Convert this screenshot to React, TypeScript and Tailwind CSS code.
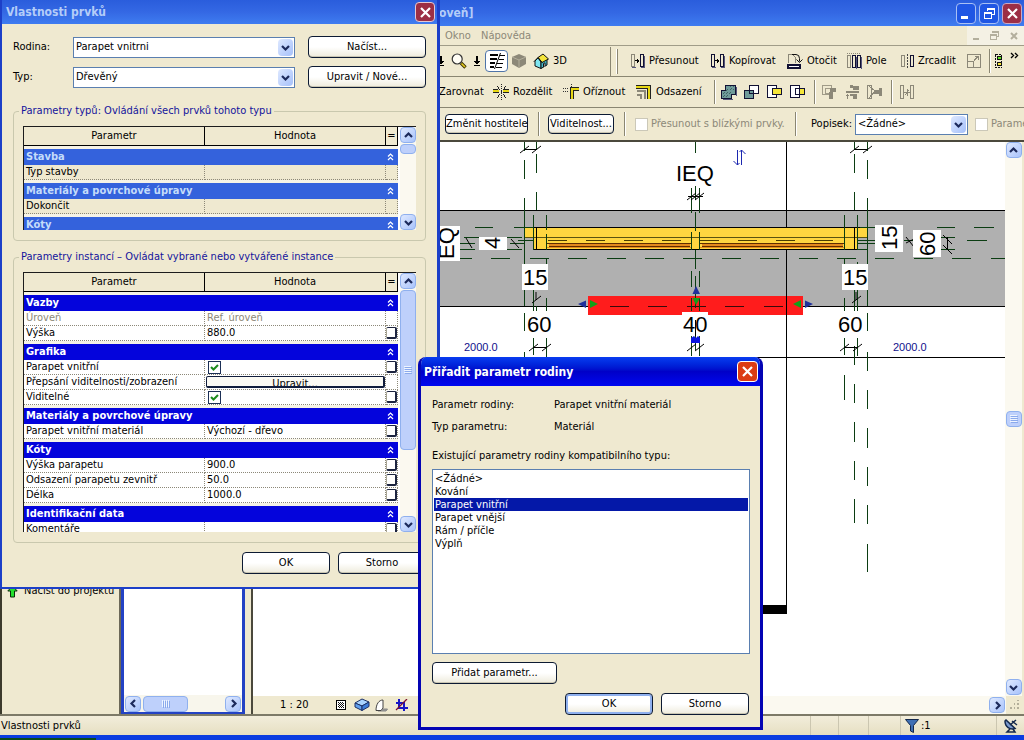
import React from 'react';

type Children = { children?: React.ReactNode };

/* ---------- shared controls ---------- */

function Chevron({ dir }: { dir: 'up' | 'down' | 'left' | 'right' }) {
  const d = {
    up: 'M1 6 L4.5 2.5 L8 6',
    down: 'M1 3 L4.5 6.5 L8 3',
    left: 'M6 1 L2.5 4.5 L6 8',
    right: 'M3 1 L6.5 4.5 L3 8',
  }[dir];
  return (
    <svg width="9" height="9" viewBox="0 0 9 9" fill="none" stroke="#1c2a5c" strokeWidth="2.2">
      <path d={d} />
    </svg>
  );
}

function ScrollButton({ dir, label }: { dir: 'up' | 'down' | 'left' | 'right'; label: string }) {
  return (
    <button
      type="button"
      aria-label={label}
      className="flex h-4 w-4 shrink-0 items-center justify-center rounded-sm border border-[#8fb0ee] bg-linear-to-br from-[#dfe9ff] to-[#a9c3fb]"
    >
      <Chevron dir={dir} />
    </button>
  );
}

function Grip({ vertical }: { vertical?: boolean }) {
  return (
    <svg width="8" height="8" viewBox="0 0 8 8" shapeRendering="crispEdges">
      <path
        d={vertical ? 'M0.5 0V7M2.5 0V7M4.5 0V7M6.5 0V7' : 'M0 0.5H7M0 2.5H7M0 4.5H7M0 6.5H7'}
        stroke="#eef4ff"
      />
      <path
        d={vertical ? 'M1.5 1V8M3.5 1V8M5.5 1V8M7.5 1V8' : 'M1 1.5H8M1 3.5H8M1 5.5H8M1 7.5H8'}
        stroke="#8aa9ec"
      />
    </svg>
  );
}

function CloseIcon() {
  return (
    <svg width="11" height="11" viewBox="0 0 11 11" stroke="#ffffff" strokeWidth="2.2">
      <path d="M1 1 L10 10 M10 1 L1 10" />
    </svg>
  );
}

function PushButton({ children, size, primary }: Children & { size: string; primary?: boolean }) {
  return (
    <button
      type="button"
      className={
        'rounded-sm border bg-linear-to-b from-white via-white to-[#eeebdc] text-center whitespace-nowrap border-[#0c1a33] ' +
        (primary ? 'shadow-[inset_0_0_0_2px_#8fb0ee] ' : 'shadow-[inset_0_-1px_0_#c9c5b2] ') +
        size
      }
    >
      {children}
    </button>
  );
}

function Combo({ id, value, className }: { id: string; value: string; className: string }) {
  return (
    <div className={'flex items-center border border-[#5a7fb0] bg-white pr-px ' + className}>
      <select
        id={id}
        className="h-full min-w-0 flex-1 appearance-none bg-transparent pl-0.5 text-black outline-none"
        defaultValue={value}
      >
        <option>{value}</option>
      </select>
      <span className="flex h-[17px] w-[15px] items-center justify-center rounded-sm bg-linear-to-br from-[#dfe9ff] to-[#a5c0fa]">
        <Chevron dir="down" />
      </span>
    </div>
  );
}

/* ---------- toolbar ---------- */

function Tool({ width, icon, label, name }: { width: string; icon: React.ReactNode; label?: string; name?: string }) {
  return (
    <button type="button" aria-label={label ?? name} className={'flex shrink-0 items-center gap-1 whitespace-nowrap ' + width}>
      {icon}
      {label && <span>{label}</span>}
    </button>
  );
}

function Divider({ width }: { width: string }) {
  return (
    <div className={'flex shrink-0 ' + width}>
      <div className="h-6 w-0.5 border-r border-l border-r-white border-l-[#8a8672]" />
    </div>
  );
}

function Icon({ w = 16, children }: Children & { w?: number }) {
  return (
    <svg width={w} height="16" viewBox={`0 0 ${w} 16`} fill="none" shapeRendering="crispEdges" className="shrink-0">
      {children}
    </svg>
  );
}

const DownArrow = () => (
  <Icon w={8}>
    <path d="M3 3h2v5h2v1h-1v1h-1v1h-2v-1h-1v-1h-1v-1h2zM1 12h6v1h-6z" fill="#000" />
  </Icon>
);
const Magnifier = () => (
  <svg width="16" height="16" viewBox="0 0 16 16" fill="none" className="shrink-0">
    <path d="M10 10 L14.5 14.5" stroke="#3a3000" strokeWidth="3.4" />
    <path d="M10.5 10.5 L14 14" stroke="#e8cf20" strokeWidth="1.6" />
    <circle cx="6.2" cy="6" r="5" fill="#fffdf5" stroke="#333" strokeWidth="1.2" />
  </svg>
);
const ThinLines = () => (
  <Icon>
    <path d="M1 2h8M1 6h7M1 10h5M1 14h4" stroke="#000" strokeWidth="2" />
    <path d="M11 2.500h5M10 6.500h5M8 10.500h6M7 14.500h6" stroke="#000" />
    <path d="M11.500 0 L5.500 16" stroke="#000" shapeRendering="auto" />
  </Icon>
);
const Cube = () => (
  <svg width="16" height="16" viewBox="0 0 16 16" className="shrink-0">
    <path d="M8 1 L15 4 V11 L8 15 L1 11 V4 Z" fill="#8c8878" />
    <path d="M1 4 L8 7 L15 4 M8 7 V15" stroke="#b3ae9a" fill="none" />
  </svg>
);
const House = () => (
  <svg width="16" height="16" viewBox="0 0 16 16" stroke="#111" strokeLinejoin="round" className="shrink-0">
    <path d="M2 8 V13 L8 15.5 V9 L5 5 Z" fill="#7fe6f0" />
    <path d="M8 9 V15.5 L14 12 V6 Z" fill="#45b9c9" />
    <path d="M5 4.500 L10 1 L15.500 6 L9 9.500 Z" fill="#f4e53a" />
    <path d="M0.800 8.800 L5 4.500 L9 9.500" fill="none" />
    <path d="M10.500 14 V10.500 L12 9.800 V13" fill="#fff" />
  </svg>
);
const MoveIcon = ({ solid }: { solid?: boolean }) => (
  <Icon w={15}>
    <path d="M1.500 1.500h3v12h-3z" stroke={solid ? '#111133' : '#8c8878'} />
    <path d="M10.500 1.500h3v12h-3z" stroke="#111133" />
    <path d="M2 14.500h4M11 14.500h4M14.500 3v12" stroke="#55557a" />
    <path d="M5 7.500h4M7.500 5.500v4M8.500 6.500v2" stroke="#000" />
  </Icon>
);
const RotateIcon = () => (
  <Icon>
    <path d="M1.500 10V1.500h4l3 3V10" stroke="#8c8878" />
    <path d="M1 12h12v3h-12z" fill="#fff" stroke="#111133" strokeWidth="2" />
    <path d="M5 1.500h4q3.500 0 3.500 4v3M9.500 6.500l3 3l3 -3" stroke="#111" shapeRendering="auto" />
  </Icon>
);
const ArrayIcon = () => (
  <Icon>
    <path d="M1.500 2.500h3v12h-3z" stroke="#8c8878" />
    <path d="M6.500 2.500h3v12h-3zM11.500 2.500h3v12h-3z" stroke="#111133" />
    <path d="M10.500 4v12M15.500 4v12" stroke="#55557a" />
    <path d="M1 0.500h14" stroke="#8c8878" strokeDasharray="1 1" />
  </Icon>
);
const MirrorIcon = () => (
  <Icon w={14}>
    <path d="M1.500 2.500h3v11h-3z" stroke="#8c8878" />
    <path d="M7.500 1v14" stroke="#444" strokeDasharray="2 1" />
    <path d="M10.500 2.500h3v11h-3z" stroke="#111133" />
  </Icon>
);
const ResizeIcon = () => (
  <Icon>
    <path d="M1.500 1.500h13v13h-13zM1.500 8.500h6v6M8 7.500l4 -4M9 3.500h3.500v3.500" stroke="#8c8878" />
  </Icon>
);
const GroupIcon = () => (
  <Icon w={9}>
    <path d="M1.500 1.500h6v13h-6z" stroke="#111" strokeDasharray="2 1" />
    <path d="M3.500 3.500h4v3h-4z" fill="#5fe020" stroke="#111" />
    <path d="M3.500 9.500h4v3h-4z" fill="#f4e53a" stroke="#111" />
  </Icon>
);
const SplitIcon = () => (
  <Icon>
    <path d="M0 7h6M10 7h6" stroke="#e8d814" strokeWidth="2" />
    <path d="M0 8.500h6M10 8.500h6M0 5.500h5M11 5.500h5" stroke="#222" />
    <path d="M8.500 0v5M8.500 11v5M4 2l3 4M13 2l-3 4M4 14l3 -4M13 14l-3 -4" stroke="#222" strokeDasharray="1 1" />
    <path d="M8.500 6v4" stroke="#222" />
  </Icon>
);
const TrimIcon = () => (
  <Icon>
    <path d="M0 4.500h6M0 7.500h6M8.500 0v4" stroke="#333" strokeDasharray="1 1" />
    <path d="M7 5h9M9 4v11" stroke="#222" strokeWidth="4" />
    <path d="M8 5h8M9 4v11" stroke="#e8d814" strokeWidth="2" />
  </Icon>
);
const OffsetIcon = () => (
  <Icon>
    <path d="M0 3h15M13 2v13" stroke="#222" strokeWidth="4" />
    <path d="M0 3h14M13 2v13" stroke="#e8d814" strokeWidth="2" />
    <path d="M1 7h8v8M1 11h4v4" stroke="#8c8878" strokeWidth="2" />
  </Icon>
);
const JoinFill = '#6f9a9a';
const JoinIcon = ({ cut }: { cut?: boolean }) => (
  <Icon>
    {cut ? (
      <>
        <path d="M1.500 6.500h9v8h-9z" fill={JoinFill} stroke="#111133" />
        <path d="M6.500 1.500h9v8h-9z" fill="#fff" stroke="#111133" />
        <path d="M6.500 6.500h4v3h-4z" fill={JoinFill} stroke="#111133" />
      </>
    ) : (
      <>
        <path d="M0.500 14.500v-8h4v-5h10v9h-4v4z" fill={JoinFill} stroke="#111133" />
        <path d="M2 13l11 -11M2 10l8 -8M5 13l8 -8" stroke="#3f6464" strokeDasharray="1 1" />
        <path d="M15.500 3v9M2 15.500h10" stroke="#55557a" />
      </>
    )}
  </Icon>
);
const BoxPair = ({ half }: { half?: boolean }) => (
  <Icon>
    <path d="M1.500 1.500h9v12h-9z" fill="#fff" stroke="#111133" />
    <path d="M6.500 4.500h9v6h-9z" fill="#f4e53a" stroke="#111133" />
    {half && <path d="M6.500 4.500h4v6h-4z" fill="#fff" stroke="#111133" />}
  </Icon>
);
const Grey1 = () => (
  <Icon>
    <path d="M0.500 1.500h9v9h-9zM3.500 4.500h5v5h-5z" stroke="#a09b88" />
    <path d="M8 4h6v4h-3v7h-4v-7h1z" fill="#8c8878" />
  </Icon>
);
const Grey2 = () => (
  <Icon>
    <path d="M5 1h3v3h-3zM8 2h6v4h-6zM1 7h13v2h-13zM5 10h7v5h-4v-3h-3z" fill="#8c8878" />
    <path d="M2.500 15v-5M1 11.500h3" stroke="#8c8878" />
  </Icon>
);
const Grey3 = () => (
  <Icon>
    <path d="M0.500 1.500h4v13h-4zM2 2l6 5l-6 7" stroke="#8c8878" />
    <path d="M7 6h7v4h-7zM12 4h3v8h-3z" fill="#8c8878" />
  </Icon>
);
const Grey4 = () => (
  <Icon>
    <path d="M1.500 1.500h3v13h-3zM11.500 1.500h3v13h-3zM5 8.500h6M6 11l4 -5M8.500 5v7" stroke="#8c8878" />
  </Icon>
);

function Toolbars() {
  return (
    <div className="shrink-0">
      <div className="flex h-[31px] items-center overflow-hidden border-b border-[#8a8672] pl-[437px]">
        <Tool width="w-3.5" name="Seznam" icon={<DownArrow />} />
        <Tool width="w-[22px]" name="Lupa" icon={<Magnifier />} />
        <Tool width="w-3" name="Možnosti lupy" icon={<DownArrow />} />
        <Tool
          width="h-[22px] w-[23px] justify-center rounded-sm border border-[#4f74a8] bg-white"
          name="Tenké čáry"
          icon={<ThinLines />}
        />
        <Tool width="w-[25px] pl-[3px]" name="Stínování" icon={<Cube />} />
        <Tool width="w-[77px]" label="3D" icon={<House />} />
        <div className="flex w-5 shrink-0 gap-[5px]">
          <div className="h-[29px] w-px bg-[#8a8672]" />
          <div className="my-0.5 w-0.5 border-r border-[#8a8672] bg-white" />
        </div>
        <Tool width="w-20" label="Přesunout" icon={<MoveIcon />} />
        <Tool width="w-[77px]" label="Kopírovat" icon={<MoveIcon solid />} />
        <Tool width="w-[59px]" label="Otočit" icon={<RotateIcon />} />
        <Tool width="w-[54px]" label="Pole" icon={<ArrayIcon />} />
        <Tool width="w-[66px]" label="Zrcadlit" icon={<MirrorIcon />} />
        <Tool width="w-[23px]" name="Měřítko" icon={<ResizeIcon />} />
        <Divider width="w-[5px]" />
        <Tool width="w-4" name="Skupina" icon={<GroupIcon />} />
        <button type="button" aria-label="Další tlačítka" className="self-start pt-1.5">
          <svg width="9" height="7" viewBox="0 0 9 7" fill="none" stroke="#000" strokeWidth="1.400">
            <path d="M1 1 L3.500 3.500 L1 6 M5 1 L7.500 3.500 L5 6" />
          </svg>
        </button>
      </div>
      <div className="flex h-[31px] items-center overflow-hidden border-b border-[#8a8672] pl-[439px]">
        <Tool width="w-[54px]" label="Zarovnat" icon={null} />
        <Tool width="w-[70px]" label="Rozdělit" icon={<SplitIcon />} />
        <Tool width="w-[73px]" label="Oříznout" icon={<TrimIcon />} />
        <Tool width="w-[78px]" label="Odsazení" icon={<OffsetIcon />} />
        <Divider width="w-[7px]" />
        <Tool width="w-[22px]" name="Spojit geometrii" icon={<JoinIcon />} />
        <Tool width="w-[23px]" name="Vyjmout geometrii" icon={<JoinIcon cut />} />
        <Tool width="w-[23px]" name="Rozdělit plochu" icon={<BoxPair />} />
        <Tool width="w-[25px]" name="Nátěr" icon={<BoxPair half />} />
        <Divider width="w-2" />
        <Tool width="w-[23px]" name="Stěna" icon={<Grey1 />} />
        <Tool width="w-[22px]" name="Nosník" icon={<Grey2 />} />
        <Tool width="w-6" name="Otvor" icon={<Grey3 />} />
        <Divider width="w-2" />
        <Tool width="w-6" name="Připojit" icon={<Grey4 />} />
      </div>
      <div className="flex h-8 items-center overflow-hidden pl-[445px] whitespace-nowrap">
        <PushButton size="mr-2.5 h-5 w-[83px] shrink-0">Změnit hostitele</PushButton>
        <Divider width="w-2.5" />
        <PushButton size="mr-2.5 h-5 w-[66px] shrink-0">Viditelnost...</PushButton>
        <Divider width="w-[11px]" />
        <label className="flex w-[160px] shrink-0 items-center gap-[3px] text-[#8c8878]">
          <input type="checkbox" disabled className="h-[13px] w-[13px] shrink-0 appearance-none border border-[#cbc8b8] bg-white" />
          Přesunout s blízkými prvky.
        </label>
        <Divider width="w-4" />
        <label htmlFor="popisek" className="w-11 shrink-0">
          Popisek:
        </label>
        <Combo id="popisek" value="<Žádné>" className="mr-[7px] h-[21px] w-[113px] shrink-0" />
        <label className="flex shrink-0 items-center gap-[3px] text-[#8c8878]">
          <input type="checkbox" disabled className="h-[13px] w-[13px] shrink-0 appearance-none border border-[#cbc8b8] bg-white" />
          Parametr instance
        </label>
      </div>
    </div>
  );
}

/* ---------- floor plan ---------- */

const INK = '#000000';
const REF = '#0b3d12';

const verticalRefs: [number, number, number][] = [
  [524, 142, 151], [524, 160, 179], [524, 198, 306], [524, 313, 331], [524, 352, 357],
  [536, 142, 149], [536, 154, 173], [536, 192, 210], [536, 306, 311],
  [533, 215, 250], [533, 290, 311], [533, 338, 355],
  [546, 215, 230], [546, 234, 250], [546, 258, 264], [546, 298, 311], [546, 338, 357],
  [691, 188, 213], [691, 232, 250], [691, 271, 287], [691, 298, 311], [691, 336, 356],
  [699, 188, 213], [699, 232, 250], [699, 271, 287], [699, 298, 311], [699, 336, 356],
  [695, 142, 153], [695, 186, 200], [695, 212, 231], [695, 250, 269], [695, 276, 308], [695, 318, 350],
  [844, 215, 250], [844, 258, 278], [844, 298, 311], [844, 338, 355], [844, 375, 400],
  [857, 215, 250], [857, 262, 266], [857, 290, 311], [857, 338, 356],
  [854, 142, 149], [854, 154, 173], [854, 192, 210], [854, 290, 311],
  [854, 346, 365], [854, 384, 403], [854, 422, 442], [854, 461, 480], [854, 499, 523],
  [867, 142, 151], [867, 160, 179], [867, 198, 306], [867, 313, 331],
  [867, 352, 371], [867, 390, 409], [867, 428, 448], [867, 467, 486], [867, 505, 524], [867, 544, 572],
];

const horizontalRefs: [number, number, number][] = [
  [227, 475, 493], [227, 514, 533], [227, 860, 878], [227, 937, 955], [227, 974, 994],
  [237, 464, 487], [237, 506, 522], [237, 937, 955],
  [240, 518, 534], [240, 857, 875], [240, 904, 918], [240, 967, 987],
  [243, 453, 475], [243, 510, 525], [243, 857, 875], [243, 929, 941],
  [249, 460, 475], [249, 506, 522], [249, 857, 868], [249, 937, 955],
];

const ticks: [number, number][] = [
  [524, 149], [536, 149], [691, 196], [695, 196], [699, 196], [533, 347], [546, 347],
  [691, 347], [699, 347], [536, 299], [854, 149], [867, 149], [844, 347], [857, 347], [856, 299],
];

function Label({ x, y, children, box, turn }: Children & { x: number; y: number; box?: [number, number, number, number]; turn?: boolean }) {
  return (
    <g>
      {box && <rect x={box[0]} y={box[1]} width={box[2]} height={box[3]} fill="#fff" />}
      <text x={x} y={y} fontSize="22" fill="#000" transform={turn ? `rotate(-90 ${x} ${y})` : undefined}>
        {children}
      </text>
    </g>
  );
}

function FloorPlan() {
  return (
    <svg className="block h-full w-full font-[family-name:'Liberation_Sans',Arial,sans-serif]" aria-label="Půdorys okna">
      <g transform="translate(-253 -142)">
        <g shapeRendering="crispEdges">
          <rect x="253" y="210" width="1600" height="96" fill="#b0b0b0" />
          <path d="M253 210.5H2000M253 306.5H2000M440 357.500H2000M786.500 142V614" stroke={INK} />
          <rect x="740" y="605" width="47" height="9" fill="#000" />
          <rect x="525" y="227" width="343" height="11" fill="#ffd640" />
          <rect x="533" y="238" width="325" height="12" fill="#ffd640" />
          <path d="M525 227.500H868M533 249.500H858" stroke={INK} />
          <path d="M525 237.500H868" stroke="#5b5310" />
          <path d="M548 240.500H845" stroke="#4a3c00" strokeDasharray="19 19" />
          {[547, 700].map((x) => (
            <g key={x}>
              <rect x={x} y="243" width={145} height="5" fill="#e58a1c" />
              <path d={`M${x} 243.500h145M${x} 246.500h145`} stroke="#5e2c00" />
              <rect x={x} y="244" width="2" height="3" fill="#ffd640" />
              <rect x={x + 143} y="244" width="2" height="3" fill="#ffd640" />
            </g>
          ))}
          <path d="M536.500 227V249M854.500 227V249M524.500 198V306M867.500 198V306" stroke={INK} />
          <path d="M453 258.500H2000" stroke={REF} strokeDasharray="19 19.400" />
          <rect x="588" y="296" width="215" height="19" fill="#ff1c1c" />
          <path d="M610 306.500H786" stroke="#3b0a0a" strokeDasharray="19 19.400" />
          <path
            d={
              verticalRefs.map(([x, a, b]) => `M${x}.5 ${a}V${b}`).join('') +
              horizontalRefs.map(([y, a, b]) => `M${a} ${y}.5H${b}`).join('')
            }
            stroke={REF}
          />
          <path
            d="M524 149.500H537M854 149.500H868M688 196.500H703M533 347.500H547M844 347.500H858M947.500 237V249M786.500 290V316"
            stroke={INK}
          />
        </g>
        <path
          d={ticks.map(([x, y]) => `M${x - 4} ${y + 4}L${x + 5} ${y - 3}`).join('') + 'M466 238L472 248M511 239L519 248M906 237L914 247M906 243L914 239M943 235L952 244M943 245L952 254M536 292V300M856 292V300'}
          stroke={INK}
          fill="none"
        />
        <path d="M586 300.500V308L578 304Z M805 300.500V308L813 304Z M692.500 294H700L696 286Z" fill="#20309c" />
        <path d="M590 300V308L598 304Z M801 300V308L793 304Z M692.500 298H700L696 305Z" fill="#12a018" />
        <path d="M691 338L694 336L696 338L698 336L700 338V343H691Z" fill="#0a14e0" />
        <path
          d="M737.500 150V165M733.500 161L737.500 165L739.500 163M741.500 165V150M739.500 152L741.500 150L745.500 154"
          stroke="#1c28b0"
          fill="none"
        />
        <Label x={676} y={181}>IEQ</Label>
        <Label x={454} y={259} box={[430, 226, 30, 35]} turn>EQ</Label>
        <Label x={500} y={249} box={[479, 237, 28, 13]} turn>4</Label>
        <Label x={897} y={250} box={[875, 225, 28, 27]} turn>15</Label>
        <Label x={935} y={256} box={[913, 230, 28, 27]} turn>60</Label>
        <Label x={523} y={285} box={[522, 264, 26, 26]}>15</Label>
        <Label x={843} y={285} box={[842, 264, 26, 26]}>15</Label>
        <Label x={527} y={332}>60</Label>
        <Label x={683} y={332} box={[682, 312, 26, 22]}>40</Label>
        <Label x={838} y={332}>60</Label>
        <path d="M695.500 320V336" stroke={INK} shapeRendering="crispEdges" />
        <g fontSize="11" fill="#10108c">
          <text x="464" y="351">2000.0</text>
          <text x="893" y="351">2000.0</text>
        </g>
      </g>
    </svg>
  );
}

/* ---------- main window ---------- */

const captionFont = 'text-[12px] font-bold ';

function MainTitle() {
  return (
    <header className="flex h-[26px] shrink-0 items-center justify-between bg-linear-to-b from-[#2a5ddc] via-[#3468e4] to-[#3f7cf0] pr-0.5 pl-[439px]">
      <h1 className={captionFont + 'text-[#b4cdf8]'}>oveň]</h1>
      <div className="flex gap-[3px]">
        <button type="button" aria-label="Minimalizovat" className="flex h-[21px] w-5 items-end rounded-sm border border-[#a9c0f4] bg-[#1f56e4] pb-1 pl-1">
          <span className="h-[3px] w-[7px] bg-white" />
        </button>
        <button type="button" aria-label="Obnovit" className="flex h-[21px] w-5 items-center justify-center rounded-sm border border-[#a9c0f4] bg-[#1f56e4]">
          <svg width="11" height="11" viewBox="0 0 11 11" fill="none" stroke="#fff" shapeRendering="crispEdges">
            <path d="M3.500 3V0.500H10.500V6.500H8M3 1.500H11M0.500 4.500H7.500V10.500H0.500ZM0 5.500H8" />
          </svg>
        </button>
        <button type="button" aria-label="Zavřít aplikaci" className="flex h-[21px] w-5 items-center justify-center rounded-sm border border-[#c9a9c4] bg-[#9c2f45]">
          <CloseIcon />
        </button>
      </div>
    </header>
  );
}

function MenuBar() {
  return (
    <nav className="flex h-5 shrink-0 items-center border-b border-[#a09c88] pl-[445px] text-[#8c8878]">
      <button type="button" className="w-9 text-left">Okno</button>
      <button type="button">Nápověda</button>
      <div className="ml-auto flex h-full items-center gap-[11px] bg-[#f4f1e4] pr-1.5 pl-1.5 text-[#b3af9d]">
        <button type="button" aria-label="Minimalizovat pohled" className="mt-1.5 h-0.5 w-1.5 bg-[#b3af9d]" />
        <button type="button" aria-label="Obnovit pohled">
          <svg width="9" height="9" viewBox="0 0 9 9" fill="none" stroke="#b3af9d" shapeRendering="crispEdges">
            <path d="M2.500 2V0.500H8.500V5.500H7M2 1.500H9M0.500 3.500H6.500V8.500H0.500ZM0 4.500H7" />
          </svg>
        </button>
        <button type="button" aria-label="Zavřít pohled">
          <svg width="8" height="8" viewBox="0 0 8 8" stroke="#b3af9d" strokeWidth="2">
            <path d="M1 1L7 7M7 1L1 7" />
          </svg>
        </button>
      </div>
    </nav>
  );
}

function ViewControls() {
  return (
    <div className="flex h-[18px] shrink-0 bg-[#efe9d0]">
      <div className="flex w-[508px] shrink-0 items-center pl-[27px]">
        <span className="w-14">1 : 20</span>
        <button type="button" aria-label="Úroveň detailů" className="w-[18px]">
          <svg width="10" height="10" viewBox="0 0 10 10" shapeRendering="crispEdges">
            <rect x="0.500" y="0.500" width="9" height="9" fill="#fff" stroke="#000" />
            <path d="M2 2h1v1h-1zM4 2h1v1h-1zM6 2h1v1h-1zM3 3h1v1h-1zM5 3h1v1h-1zM7 3h1v1h-1zM2 4h1v1h-1zM4 4h1v1h-1zM6 4h1v1h-1zM3 5h1v1h-1zM5 5h1v1h-1zM7 5h1v1h-1zM2 6h1v1h-1zM4 6h1v1h-1zM6 6h1v1h-1zM3 7h1v1h-1zM5 7h1v1h-1zM7 7h1v1h-1z" fill="#111" />
          </svg>
        </button>
        <button type="button" aria-label="Styl zobrazení" className="w-[21px]">
          <svg width="16" height="14" viewBox="0 0 16 14" stroke="#1c2f66" strokeLinejoin="round">
            <path d="M1 5L8 1L15 4L8 8Z" fill="#a9d3ff" />
            <path d="M1 5V9L8 12.500V8Z" fill="#62a0ee" />
            <path d="M8 8V12.500L15 8.500V4Z" fill="#3d7bd6" />
          </svg>
        </button>
        <button type="button" aria-label="Stíny" className="w-5">
          <svg width="13" height="13" viewBox="0 0 13 13" stroke="#444">
            <path d="M3 12H11L12.500 10H8" fill="#999" stroke="#888" />
            <path d="M1 11.500C1 5 4 1 8 1V9L6 11.500Z" fill="#fff" />
          </svg>
        </button>
        <button type="button" aria-label="Oříznutí">
          <svg width="13" height="12" viewBox="0 0 13 12" stroke="#1616c8" strokeWidth="2" fill="none">
            <path d="M1 4H9V12M4 0V9H13" />
            <path d="M12 0L1 11" stroke="#7a1030" strokeWidth="1.300" />
          </svg>
        </button>
      </div>
      <div className="flex flex-1 items-center justify-end bg-[#fbf9f0] pr-px">
        <ScrollButton dir="right" label="Posunout vpravo" />
      </div>
      <div className="flex w-[18px] items-end justify-end bg-[#efe9d0] p-1">
        <svg width="11" height="11" viewBox="0 0 11 11" fill="#b3ae9a" shapeRendering="crispEdges">
          <path d="M8 0h2v2h-2zM4 4h2v2h-2zM8 4h2v2h-2zM0 8h2v2h-2zM4 8h2v2h-2zM8 8h2v2h-2z" />
        </svg>
      </div>
    </div>
  );
}

function Workspace() {
  return (
    <div className="flex min-h-0 flex-1">
      <aside className="flex w-[121px] shrink-0 flex-col border-r-2 border-l-2 border-r-[#6b6858] border-l-[#3c3a2c]">
        <button type="button" className="mt-[443px] flex items-center gap-1.5 pl-[5px] whitespace-nowrap">
          <svg width="11" height="13" viewBox="0 0 11 13" fill="#24e02c" stroke="#0b2b0b">
            <path d="M5.500 0.800L10.200 6H7.500V12H3.500V6H0.800Z" />
          </svg>
          Načíst do projektu
        </button>
      </aside>
      <section
        aria-label="Prohlížeč projektu"
        className="flex w-[124px] shrink-0 flex-col border-r-3 border-b-2 border-l-3 border-[#2342c4] bg-white"
      >
        <div className="flex-1" />
        <div className="flex h-[17px] items-center bg-[#f8f6ec] px-px">
          <ScrollButton dir="left" label="Posunout vlevo" />
          <div className="ml-0.5 flex h-4 w-[45px] items-center justify-center rounded-sm border border-[#8fb0ee] bg-[#bed0fb]">
            <Grip vertical />
          </div>
          <div className="flex-1" />
          <ScrollButton dir="right" label="Posunout vpravo" />
        </div>
      </section>
      <main className="ml-1.5 flex min-w-0 flex-1 flex-col border-t-2 border-l-2 border-t-[#4b493c] border-l-[#4b493c]">
        <div className="flex min-h-0 flex-1">
          <div className="min-w-0 flex-1 overflow-hidden bg-white">
            <FloorPlan />
          </div>
          <div className="flex w-[19px] shrink-0 flex-col items-center border-r-2 border-r-[#efe9d0] bg-[#fbf9f0] pb-px">
            <ScrollButton dir="up" label="Posunout nahoru" />
            <div className="flex-1" />
            <div className="flex h-4 w-4 items-center justify-center rounded-sm border border-[#8fb0ee] bg-[#bed0fb]">
              <Grip />
            </div>
            <div className="flex-1" />
            <ScrollButton dir="down" label="Posunout dolů" />
          </div>
        </div>
        <ViewControls />
      </main>
    </div>
  );
}

function StatusBar() {
  return (
    <footer className="flex h-[21px] shrink-0 items-center justify-between border-t-2 border-[#7d7a68] bg-linear-to-b from-[#f2eddb] to-[#e6dfc2] pl-px">
      <span>Vlastnosti prvků</span>
      <div className="flex h-full items-center">
        {['w-7', 'w-[30px]', 'w-8'].map((w) => (
          <div key={w} className={'h-full border-l border-[#cbc6b0] ' + w} />
        ))}
        <div className="flex h-full w-24 items-center gap-0.5 border-l border-[#cbc6b0] pl-1">
          <svg width="14" height="14" viewBox="0 0 14 14">
            <path d="M0.500 0.500H13.500L8.500 6.500V13.500L5.500 12V6.500Z" fill="#3f6fb4" stroke="#14284c" />
          </svg>
          <span>:1</span>
        </div>
        <div className="flex h-full w-7 items-center justify-center border-l border-[#cbc6b0]">
          <svg width="14" height="14" viewBox="0 0 14 14" fill="none" stroke="#14284c" strokeWidth="1.500">
            <path d="M1 2C1 8 6 11 11 9.500L2 1Z" fill="#7d9cd0" />
            <path d="M6 6L12 1M8 2L13 6M6 10L3 13H11L9 10" />
          </svg>
        </div>
      </div>
    </footer>
  );
}

/* ---------- property tables ---------- */

type Row = { name: string; value?: string; kind?: 'check' | 'button' | 'muted'; link?: boolean };
type Group = { title: string; rows: Row[] };

const typeGroups: Group[] = [
  { title: 'Stavba', rows: [{ name: 'Typ stavby' }] },
  { title: 'Materiály a povrchové úpravy', rows: [{ name: 'Dokončit' }] },
  { title: 'Kóty', rows: [] },
];

const instanceGroups: Group[] = [
  {
    title: 'Vazby',
    rows: [
      { name: 'Úroveň', value: 'Ref. úroveň', kind: 'muted' },
      { name: 'Výška', value: '880.0', link: true },
    ],
  },
  {
    title: 'Grafika',
    rows: [
      { name: 'Parapet vnitřní', kind: 'check', link: true },
      { name: 'Přepsání viditelnosti/zobrazení', value: 'Upravit...', kind: 'button' },
      { name: 'Viditelné', kind: 'check', link: true },
    ],
  },
  { title: 'Materiály a povrchové úpravy', rows: [{ name: 'Parapet vnitřní materiál', value: 'Výchozí - dřevo', link: true }] },
  {
    title: 'Kóty',
    rows: [
      { name: 'Výška parapetu', value: '900.0', link: true },
      { name: 'Odsazení parapetu zevnitř', value: '50.0', link: true },
      { name: 'Délka', value: '1000.0', link: true },
    ],
  },
  { title: 'Identifikační data', rows: [{ name: 'Komentáře', link: true }] },
];

function DoubleChevron() {
  return (
    <svg width="7" height="8" viewBox="0 0 7 8" fill="none" stroke="#fff" strokeWidth="1.200" className="ml-px">
      <path d="M1 3.500L3.500 1L6 3.500M1 7L3.500 4.500L6 7" />
    </svg>
  );
}

function CellValue({ row }: { row: Row }) {
  if (row.kind === 'check') {
    return (
      <span className="flex h-3.5 items-center pl-0.5">
        <span className="relative flex h-[13px] w-[13px]">
          <input type="checkbox" defaultChecked aria-label={row.name} className="h-[13px] w-[13px] appearance-none border border-[#1c2f55] bg-white" />
          <svg width="13" height="13" viewBox="0 0 13 13" fill="none" stroke="#1c8a1c" strokeWidth="2" className="pointer-events-none absolute inset-0">
            <path d="M3 6L5.500 8.500L10 4" />
          </svg>
        </span>
      </span>
    );
  }
  if (row.kind === 'button') {
    return (
      <button type="button" className="block h-3 w-full overflow-hidden rounded-xs border border-r-2 border-b-2 border-[#101c3c] bg-[#fbfaf4] text-center leading-[14px]">
        {row.value}
      </button>
    );
  }
  return <span className="block h-3.5 pl-px">{row.value}</span>;
}

function PropertyTable({ groups, bar, blank, height, thumb, grip }: { groups: Group[]; bar: string; blank: string; height: string; thumb: string; grip?: boolean }) {
  const cell = 'h-[15px] overflow-hidden border-b border-dotted border-[#8c8878] p-0 leading-[14px] ';
  const head = 'h-[19px] border-b border-black bg-[#efe9d0] p-0 font-normal leading-[18px] ';
  return (
    <div className={'flex overflow-hidden border-t border-l border-[#1c1c1c] ' + height}>
      <div className={'min-w-0 flex-1 overflow-hidden ' + blank}>
        <table className="w-full table-fixed border-separate border-spacing-0">
          <colgroup>
            <col />
            <col />
            <col className="w-3" />
          </colgroup>
          <thead>
            <tr>
              <th className={head + 'border-r'}>Parametr</th>
              <th className={head + 'border-r'}>Hodnota</th>
              <th className={head + 'border-r'}>=</th>
            </tr>
          </thead>
          {groups.map((g) => (
            <tbody key={g.title}>
              <tr>
                <th colSpan={2} className={'h-[19px] border-t-3 border-[#f6f3e6] p-0 pl-0.5 text-left leading-4 font-bold ' + bar}>
                  {g.title}
                </th>
                <td className={'h-[19px] border-t-3 border-[#f6f3e6] p-0 ' + bar}>
                  <DoubleChevron />
                </td>
              </tr>
              {g.rows.map((r) => (
                <tr key={r.name} className={r.kind === 'muted' ? 'text-[#8c8878]' : ''}>
                  <td className={cell + 'border-r pl-0.5 whitespace-nowrap'}>{r.name}</td>
                  <td className={cell + 'border-r pl-px'}>
                    <CellValue row={r} />
                  </td>
                  <td className={cell + 'border-r'}>
                    {r.link && (
                      <button type="button" aria-label={'Přiřadit parametr: ' + r.name} className="block h-3 w-[11px] rounded-xs border border-r-2 border-b-2 border-[#1c2440] border-l-[#a9a695] bg-white" />
                    )}
                  </td>
                </tr>
              ))}
            </tbody>
          ))}
        </table>
      </div>
      <div className="flex w-[18px] shrink-0 flex-col items-center border-l-2 border-white bg-[#fbf9f0]">
        <ScrollButton dir="up" label="Posunout nahoru" />
        <div className={'mt-px flex w-4 items-center justify-center rounded-sm border border-[#8fb0ee] bg-[#bed0fb] ' + thumb}>{grip && <Grip />}</div>
        <div className="flex-1" />
        <ScrollButton dir="down" label="Posunout dolů" />
      </div>
    </div>
  );
}

/* ---------- dialogs ---------- */

function PropertiesDialog() {
  return (
    <section
      role="dialog"
      aria-label="Vlastnosti prvků"
      className="absolute top-0 left-0 w-[440px] border-r-3 border-b-2 border-l-2 border-[#1c3fc8] bg-[#efe9d0]"
    >
      <header className="flex h-6 items-center justify-between bg-linear-to-b from-[#2a5ddc] via-[#3468e4] to-[#3f7cf0] pr-0.5 pl-1">
        <h2 className={captionFont + 'text-[#b4cdf8]'}>Vlastnosti prvků</h2>
        <button type="button" aria-label="Zavřít" className="flex h-5 w-5 items-center justify-center rounded-sm border border-[#e4c9d4] bg-[#9c2f45]">
          <CloseIcon />
        </button>
      </header>
      <div className="px-[11px] pt-3 pb-[13px]">
        <div className="mb-2 flex h-[22px] items-center">
          <label htmlFor="rodina" className="w-15">Rodina:</label>
          <Combo id="rodina" value="Parapet vnitrni" className="mr-[13px] h-[21px] w-[222px]" />
          <PushButton size="h-[22px] w-[118px]">Načíst...</PushButton>
        </div>
        <div className="flex h-[22px] items-center">
          <label htmlFor="typ" className="w-15">Typ:</label>
          <Combo id="typ" value="Dřevěný" className="mr-[13px] h-[21px] w-[222px]" />
          <PushButton size="h-[22px] w-[118px]">Upravit / Nové...</PushButton>
        </div>
        <fieldset className="mt-4 rounded border border-[#c9c8ae] px-[9px] pt-2 pb-2.5">
          <legend className="-ml-1 px-0.5 leading-[14px] text-[#14149c]">Parametry typů: Ovládání všech prvků tohoto typu</legend>
          <PropertyTable groups={typeGroups} bar="bg-[#3462dc] text-[#c4dcfa]" blank="bg-[#efe9d0]" height="h-[104px]" thumb="h-2.5" />
        </fieldset>
        <fieldset className="mt-[9px] rounded border border-[#c9c8ae] px-[9px] pt-2 pb-2.5">
          <legend className="-ml-1 px-0.5 leading-[14px] text-[#14149c]">Parametry instancí – Ovládat vybrané nebo vytvářené instance</legend>
          <PropertyTable groups={instanceGroups} bar="bg-[#0404dc] text-white" blank="bg-white" height="h-[260px]" thumb="h-[160px]" grip />
        </fieldset>
        <div className="mt-[9px] flex justify-end gap-2">
          <PushButton size="h-[22px] w-[88px]">OK</PushButton>
          <PushButton size="h-[22px] w-[88px]">Storno</PushButton>
        </div>
      </div>
    </section>
  );
}

const familyParameters = ['<Žádné>', 'Kování', 'Parapet vnitřní', 'Parapet vnější', 'Rám / příčle', 'Výplň'];

function AssignDialog() {
  return (
    <section
      role="dialog"
      aria-label="Přiřadit parametr rodiny"
      className="absolute top-[357px] left-[418px] w-[345px] overflow-hidden rounded-t-lg border-r-3 border-b-3 border-l-3 border-[#0404b4] bg-[#efe9d0]"
    >
      <header className="flex h-[29px] items-center justify-between bg-linear-to-b from-[#0a3cf0] via-[#0000c8] to-[#0008f0] pr-0.5 pl-[3px]">
        <h2 className={captionFont + 'text-white'}>Přiřadit parametr rodiny</h2>
        <button type="button" aria-label="Zavřít" className="flex h-[21px] w-[21px] items-center justify-center rounded-sm border border-white bg-[#dc3c14]">
          <CloseIcon />
        </button>
      </header>
      <div className="px-[11px] pt-2 pb-3">
        <dl className="grid grid-cols-[122px_1fr] leading-[22px]">
          <dt>Parametr rodiny:</dt>
          <dd>Parapet vnitřní materiál</dd>
          <dt>Typ parametru:</dt>
          <dd>Materiál</dd>
        </dl>
        <p id="existing" className="mt-2.5 leading-4">Existující parametry rodiny kompatibilního typu:</p>
        <ul role="listbox" aria-labelledby="existing" className="mt-[5px] h-[185px] w-[318px] border border-[#5a7fb0] bg-white px-px pt-0.5">
          {familyParameters.map((p) => (
            <li
              key={p}
              role="option"
              aria-selected={p === 'Parapet vnitřní'}
              className={'h-[13px] pl-px leading-[13px] ' + (p === 'Parapet vnitřní' ? 'bg-[#0418a8] text-white' : '')}
            >
              {p}
            </li>
          ))}
        </ul>
        <PushButton size="mt-2 block h-[22px] w-[125px]">Přidat parametr...</PushButton>
        <div className="mt-[9px] flex justify-end gap-2">
          <PushButton size="h-[22px] w-[88px]" primary>OK</PushButton>
          <PushButton size="h-[22px] w-[88px]">Storno</PushButton>
        </div>
      </div>
    </section>
  );
}

export default function App() {
  return (
    <div className="relative flex h-screen flex-col overflow-hidden bg-[#efe9d0] font-[family-name:'DejaVu_Sans_Condensed','DejaVu_Sans',sans-serif] text-[11px] leading-4 text-black">
      <MainTitle />
      <MenuBar />
      <Toolbars />
      <Workspace />
      <StatusBar />
      <div className="h-[5px] shrink-0 bg-[#0a3ce0]">
        <div className="mt-[3px] h-0.5 w-24 bg-[#0b4a18]" />
      </div>
      <PropertiesDialog />
      <AssignDialog />
    </div>
  );
}
